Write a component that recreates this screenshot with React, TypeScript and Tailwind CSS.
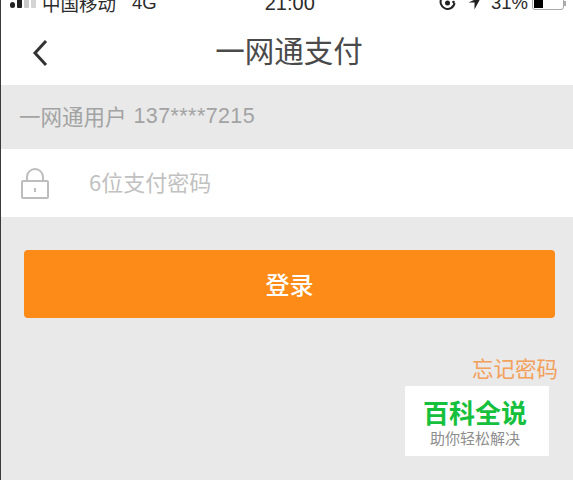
import React from "react";

const font = { fontFamily: '"Noto Sans CJK SC", "Liberation Sans", sans-serif' };
const latin = { fontFamily: '"Liberation Sans", "Noto Sans CJK SC", sans-serif' };

export default function App() {
  return (
    <div className="relative w-[573px] h-[480px] overflow-hidden bg-[#e9e9e9] border-l border-[#3a3a3a] font-['Liberation_Sans','Noto_Sans_CJK_SC',sans-serif]">
      <header className="bg-white h-[85px] flex flex-col">
        <div className="h-[14px] overflow-hidden flex items-end pl-[9px] pr-[7px] text-[#2b2b2b]">
          <div className="flex items-center h-[22px]">
            <div className="flex items-end gap-[2px] mr-[6px] h-[14px]">
              <span className="w-[5px] h-[6px] mb-[2px] rounded-full bg-[#222]" />
              <span className="w-[5px] h-[9px] mb-[2px] rounded-[1px] bg-[#222]" />
              <span className="w-[5px] h-[12px] mb-[2px] rounded-[1px] bg-[#c9c9c9]" />
              <span className="w-[5px] h-[14px] mb-[2px] rounded-[1px] bg-[#d4d4d4]" />
            </div>
            <span className="text-[18.5px] leading-[22px]" style={font}>中国移动</span>
            <span className="text-[18.5px] leading-[22px] ml-[16px]">4G</span>
          </div>
          <span className="text-[20px] leading-[22px] ml-[108px]">21:00</span>
          <div className="flex items-center h-[22px] ml-auto">
            <svg width="18" height="18" viewBox="0 0 18 18" className="mr-[11px]" fill="none" stroke="#222" strokeWidth="2">
              <path d="M14 3.5A7 7 0 1 0 15.5 9" />
              <circle cx="8.5" cy="9" r="2.5" fill="#222" stroke="none" />
              <circle cx="14.5" cy="8" r="1.3" fill="#222" stroke="none" />
            </svg>
            <svg width="14" height="14" viewBox="0 0 14 14" className="mr-[9px]">
              <path d="M13.5 .5 .5 6.5h6v7z" fill="#222" />
            </svg>
            <span className="text-[18.5px] leading-[22px]">31%</span>
            <div className="ml-[4px] w-[32px] h-[15px] rounded-[3px] border border-[#a8a8a8] p-[1px] mb-[1px]">
              <div className="w-[9px] h-full bg-black" />
            </div>
            <span className="w-[2px] h-[5px] bg-[#aaa]" />
          </div>
        </div>
        <div className="relative flex-1 flex items-center justify-center">
          <svg width="16" height="28" viewBox="0 0 16 28" className="absolute left-[31px] top-[25px]" fill="none" stroke="#333" strokeWidth="3">
            <path d="M14 2 3 14l11 12" />
          </svg>
          <span className="text-[29.5px] leading-none text-[#4a4a4a] ml-[4px] mt-[1px]" style={font}>一网通支付</span>
        </div>
      </header>

      <div className="h-[64px] flex items-center pl-[18px] pb-[1px] text-[21.5px] text-[#a3a3a3]" style={font}>
        一网通用户<span className="ml-[7px] tracking-[0.4px]" style={latin}>137****7215</span>
      </div>

      <div className="h-[68px] bg-white flex items-center pl-[20px]">
        <svg width="28" height="31" viewBox="0 0 28 31" fill="none" stroke="#bdbdbd" strokeWidth="2">
          <rect x="1" y="13" width="26" height="17" rx="1" />
          <path d="M6 13V9a8 8 0 0 1 16 0v4" />
          <path d="M14 20v4" />
        </svg>
        <span className="ml-[40px] mb-[3px] text-[22px] text-[#c1c1c1]" style={font}>6位支付密码</span>
      </div>

      <div className="pl-[23px] pr-[18px] pt-[33px]">
        <button className="w-full h-[68px] rounded-[4px] bg-[#fd8b17] text-white text-[24px] font-medium flex items-center justify-center" style={font}>
          登录
        </button>
      </div>

      <div className="flex justify-end pt-[36px] pr-[15px] text-[21.5px] leading-[28px] text-[#f3a05a]" style={font}>
        忘记密码
      </div>

      <div className="absolute left-[404px] top-[386px] w-[144px] h-[70px] bg-white flex flex-col items-center pt-[10px] pr-[4px]">
        <span className="text-[26px] leading-[32px] font-bold text-[#15c13c]" style={font}>百科全说</span>
        <span className="text-[15px] leading-[20px] text-[#8d8d8d]" style={font}>助你轻松解决</span>
      </div>
    </div>
  );
}
